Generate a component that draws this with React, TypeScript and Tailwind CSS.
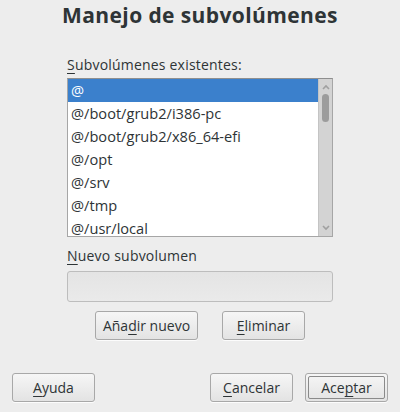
const items = [
  '@',
  '@/boot/grub2/i386-pc',
  '@/boot/grub2/x86_64-efi',
  '@/opt',
  '@/srv',
  '@/tmp',
  '@/usr/local',
];

const font = { fontFamily: '"Open Sans", "DejaVu Sans", sans-serif' };

function Btn({ children, className = '', def = false }: { children: React.ReactNode; className?: string; def?: boolean }) {
  return (
    <button
      className={`h-[29px] rounded-[3px] border border-[#a8a8a8] bg-gradient-to-b from-[#f6f6f6] to-[#e3e3e3] p-[2px] text-[14px] text-[#2e3436] shadow-[0_1px_0_rgba(255,255,255,0.8)] ${className}`}
    >
      <span
        className={`flex h-full w-full items-center justify-center ${def ? 'rounded-[2px] border border-[#8a8a8a]' : ''}`}
      >
        {children}
      </span>
    </button>
  );
}

const U = ({ children }: { children: React.ReactNode }) => (
  <span className="underline decoration-1 underline-offset-[3px]">{children}</span>
);

export default function App() {
  return (
    <div style={font} className="flex h-[412px] w-[400px] flex-col bg-[#ededed] text-[#2e3436]">
      <h1 className="mt-[3px] text-center text-[21px] leading-[24px] font-bold tracking-[0.4px] text-[#2e3436]">
        Manejo de subvolúmenes
      </h1>

      <div className="mx-auto mt-[28px] flex w-[266px] flex-col">
        <label className="text-[14px] leading-[20px] tracking-[0.2px]">
          <U>S</U>ubvolúmenes existentes:
        </label>

        <div className="mt-[3px] flex h-[159px] overflow-hidden border border-[#a6a6a6] border-t-[#8f8f8f] bg-white">
          <ul className="flex-1 overflow-hidden">
            {items.map((it, i) => (
              <li
                key={it}
                className={`flex h-[23px] shrink-0 items-center pl-[3px] text-[14.6px] ${
                  i === 0 ? 'bg-[#3b80cc] text-white' : 'text-[#2e3436]'
                }`}
              >
                {it}
              </li>
            ))}
          </ul>
          <div className="flex w-[14px] flex-col items-center border-l border-[#c4c4c4] bg-[#d3d3d3]">
            <svg width="8" height="6" viewBox="0 0 8 6" className="mt-[5px]">
              <path d="M1 5 L4 2 L7 5" fill="none" stroke="#a0a0a0" strokeWidth="1.6" />
            </svg>
            <div className="mt-[4px] h-[28px] w-[7px] rounded-full bg-[#9c9c9c]" />
            <div className="flex-1" />
            <svg width="8" height="6" viewBox="0 0 8 6" className="mb-[5px]">
              <path d="M1 1 L4 4 L7 1" fill="none" stroke="#a0a0a0" strokeWidth="1.6" />
            </svg>
          </div>
        </div>

        <label className="mt-[9px] text-[14px] leading-[20px] tracking-[0.2px]">
          <U>N</U>uevo subvolumen
        </label>
        <div className="mt-[5px] h-[31px] rounded-[3px] border border-[#bdbdbd] bg-gradient-to-b from-[#e4e4e4] to-[#eaeaea]" />

        <div className="mt-[9px] flex justify-center gap-[24px]">
          <Btn className="w-[103px]">
            Aña<U>d</U>ir nuevo
          </Btn>
          <Btn className="w-[83px]">
            <U>E</U>liminar
          </Btn>
        </div>
      </div>

      <div className="mt-[33px] flex gap-[12px] px-[12px]">
        <Btn className="w-[83px]">
          <U>A</U>yuda
        </Btn>
        <div className="flex-1" />
        <Btn className="w-[83px]">
          <U>C</U>ancelar
        </Btn>
        <Btn className="w-[83px]" def>
          Ace<U>p</U>tar
        </Btn>
      </div>
    </div>
  );
}
